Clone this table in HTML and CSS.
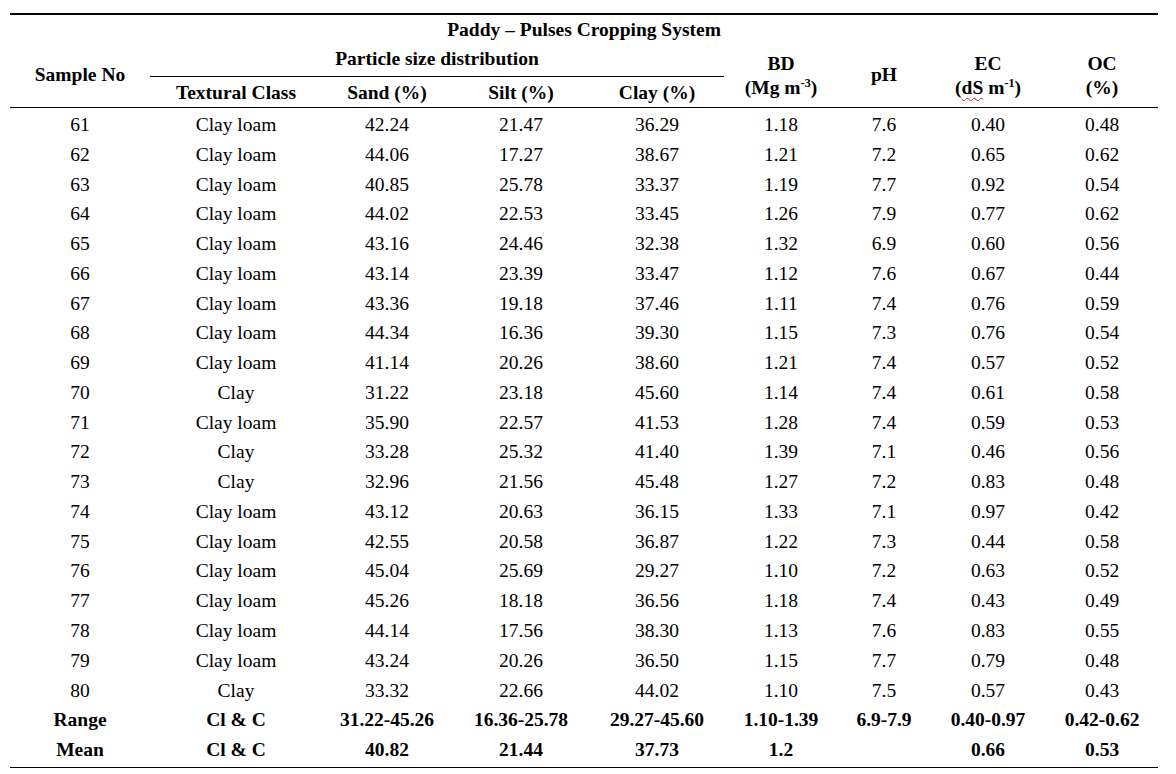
FILE: index.html
```html
<!DOCTYPE html>
<html>
<head>
<meta charset="utf-8">
<link rel="stylesheet" href="styles.css">
</head>
<body>
<table class="soil">
  <colgroup>
    <col class="c1"><col class="c2"><col class="c3"><col class="c4"><col class="c5"><col class="c6"><col class="c7"><col class="c8"><col class="c9">
  </colgroup>
  <thead>
    <tr class="h1"><th colspan="9">Paddy – Pulses Cropping System</th></tr>
    <tr class="h2">
      <th rowspan="2" class="one">Sample No</th>
      <th colspan="4" class="psd">Particle size distribution</th>
      <th rowspan="2" class="two">BD<br>(Mg m<sup>-3</sup>)</th>
      <th rowspan="2" class="one">pH</th>
      <th rowspan="2" class="two">EC<br>(<span class="spell">dS</span> m<sup>-1</sup>)</th>
      <th rowspan="2" class="two">OC<br>(%)</th>
    </tr>
    <tr class="h3">
      <th>Textural Class</th><th>Sand (%)</th><th>Silt (%)</th><th>Clay (%)</th>
    </tr>
  </thead>
  <tbody>
    <tr><td>61</td><td>Clay loam</td><td>42.24</td><td>21.47</td><td>36.29</td><td>1.18</td><td>7.6</td><td>0.40</td><td>0.48</td></tr>
    <tr><td>62</td><td>Clay loam</td><td>44.06</td><td>17.27</td><td>38.67</td><td>1.21</td><td>7.2</td><td>0.65</td><td>0.62</td></tr>
    <tr><td>63</td><td>Clay loam</td><td>40.85</td><td>25.78</td><td>33.37</td><td>1.19</td><td>7.7</td><td>0.92</td><td>0.54</td></tr>
    <tr><td>64</td><td>Clay loam</td><td>44.02</td><td>22.53</td><td>33.45</td><td>1.26</td><td>7.9</td><td>0.77</td><td>0.62</td></tr>
    <tr><td>65</td><td>Clay loam</td><td>43.16</td><td>24.46</td><td>32.38</td><td>1.32</td><td>6.9</td><td>0.60</td><td>0.56</td></tr>
    <tr><td>66</td><td>Clay loam</td><td>43.14</td><td>23.39</td><td>33.47</td><td>1.12</td><td>7.6</td><td>0.67</td><td>0.44</td></tr>
    <tr><td>67</td><td>Clay loam</td><td>43.36</td><td>19.18</td><td>37.46</td><td>1.11</td><td>7.4</td><td>0.76</td><td>0.59</td></tr>
    <tr><td>68</td><td>Clay loam</td><td>44.34</td><td>16.36</td><td>39.30</td><td>1.15</td><td>7.3</td><td>0.76</td><td>0.54</td></tr>
    <tr><td>69</td><td>Clay loam</td><td>41.14</td><td>20.26</td><td>38.60</td><td>1.21</td><td>7.4</td><td>0.57</td><td>0.52</td></tr>
    <tr><td>70</td><td>Clay</td><td>31.22</td><td>23.18</td><td>45.60</td><td>1.14</td><td>7.4</td><td>0.61</td><td>0.58</td></tr>
    <tr><td>71</td><td>Clay loam</td><td>35.90</td><td>22.57</td><td>41.53</td><td>1.28</td><td>7.4</td><td>0.59</td><td>0.53</td></tr>
    <tr><td>72</td><td>Clay</td><td>33.28</td><td>25.32</td><td>41.40</td><td>1.39</td><td>7.1</td><td>0.46</td><td>0.56</td></tr>
    <tr><td>73</td><td>Clay</td><td>32.96</td><td>21.56</td><td>45.48</td><td>1.27</td><td>7.2</td><td>0.83</td><td>0.48</td></tr>
    <tr><td>74</td><td>Clay loam</td><td>43.12</td><td>20.63</td><td>36.15</td><td>1.33</td><td>7.1</td><td>0.97</td><td>0.42</td></tr>
    <tr><td>75</td><td>Clay loam</td><td>42.55</td><td>20.58</td><td>36.87</td><td>1.22</td><td>7.3</td><td>0.44</td><td>0.58</td></tr>
    <tr><td>76</td><td>Clay loam</td><td>45.04</td><td>25.69</td><td>29.27</td><td>1.10</td><td>7.2</td><td>0.63</td><td>0.52</td></tr>
    <tr><td>77</td><td>Clay loam</td><td>45.26</td><td>18.18</td><td>36.56</td><td>1.18</td><td>7.4</td><td>0.43</td><td>0.49</td></tr>
    <tr><td>78</td><td>Clay loam</td><td>44.14</td><td>17.56</td><td>38.30</td><td>1.13</td><td>7.6</td><td>0.83</td><td>0.55</td></tr>
    <tr><td>79</td><td>Clay loam</td><td>43.24</td><td>20.26</td><td>36.50</td><td>1.15</td><td>7.7</td><td>0.79</td><td>0.48</td></tr>
    <tr><td>80</td><td>Clay</td><td>33.32</td><td>22.66</td><td>44.02</td><td>1.10</td><td>7.5</td><td>0.57</td><td>0.43</td></tr>
    <tr class="sum"><td>Range</td><td>Cl &amp; C</td><td>31.22-45.26</td><td>16.36-25.78</td><td>29.27-45.60</td><td>1.10-1.39</td><td>6.9-7.9</td><td>0.40-0.97</td><td>0.42-0.62</td></tr>
    <tr class="sum last"><td>Mean</td><td>Cl &amp; C</td><td>40.82</td><td>21.44</td><td>37.73</td><td>1.2</td><td></td><td>0.66</td><td>0.53</td></tr>
  </tbody>
</table>
</body>
</html>
```

FILE: styles.css
```css
html, body {
  margin: 0;
  padding: 0;
  background: #ffffff;
}

body {
  font-family: "Liberation Serif", "Times New Roman", serif;
  font-size: 19.5px;
  color: #000000;
}

.soil {
  margin: 13px 0 0 10px;
  width: 1148px;
  border-collapse: collapse;
  table-layout: fixed;
  border-top: 2px solid #000;
  border-bottom: 1px solid #000;
}

.c1 { width: 140px; }
.c2 { width: 172px; }
.c3 { width: 130px; }
.c4 { width: 138px; }
.c5 { width: 134px; }
.c6 { width: 114px; }
.c7 { width: 92px; }
.c8 { width: 116px; }
.c9 { width: 112px; }

th, td {
  padding: 0;
  text-align: center;
  vertical-align: middle;
  white-space: nowrap;
}

th {
  font-weight: bold;
}

.h1 th {
  height: 30px;
  line-height: 24px;
  padding-top: 0;
}

.h2 th {
  height: 28px;
  line-height: 24px;
}

.h2 th.psd {
  border-bottom: 1px solid #000;
  padding-bottom: 3px;
}

.h2 th.one {
  padding-bottom: 3px;
}

.h2 th.two {
  line-height: 24px;
  padding-bottom: 1px;
}

.h3 th {
  height: 31px;
  line-height: 24px;
  padding-top: 2px;
  box-sizing: border-box;
}

thead {
  border-bottom: 1px solid #000;
}

sup {
  font-size: 0.62em;
  line-height: 0;
  vertical-align: 0.6em;
}

.spell {
  text-decoration: underline wavy #e02020;
  text-decoration-thickness: 1px;
  text-underline-offset: 3px;
}

td {
  line-height: 29.76px;
}

tbody tr:first-child td {
  padding-top: 2px;
}

.sum td {
  font-weight: bold;
}

.last td {
  padding-bottom: 2px;
}
```
